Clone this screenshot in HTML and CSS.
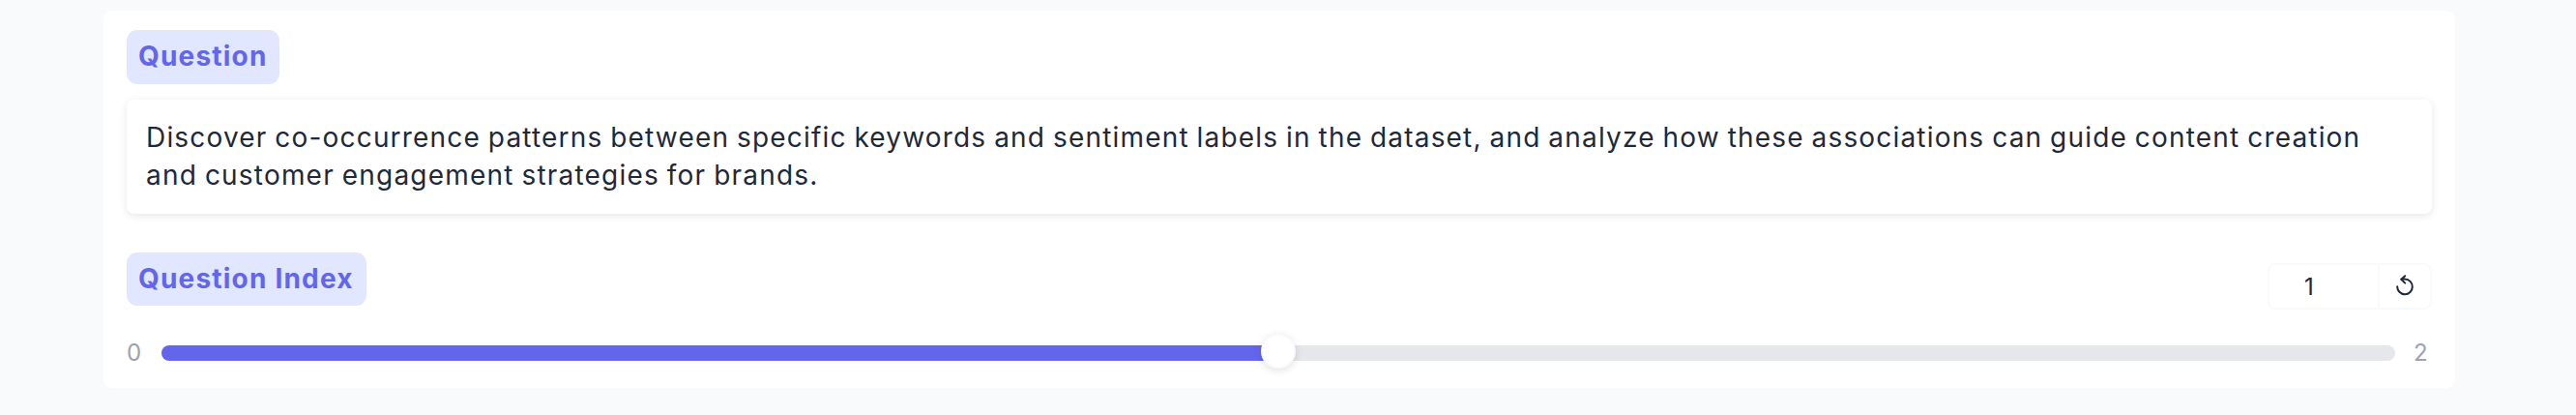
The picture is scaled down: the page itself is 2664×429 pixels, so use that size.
FILE: index.html
```
<!DOCTYPE html>

<html lang="en">

  <head>

    <meta charset="utf-8">

    <title>Question</title>

    <link rel="stylesheet" href="styles.css">

  </head>

  <body>

    <div class="card">

      <p class="label">Question</p>

      <div class="questionBox">
        <span class="line firstLine">Discover co-occurrence patterns between specific keywords and sentiment labels in the dataset, and analyze how these associations can guide content creation</span>
        <span class="line secondLine">and customer engagement strategies for brands.</span>
      </div>

      <div class="indexHeader">

        <p class="label indexLabel">Question Index</p>

        <div class="numberBox">

          <div class="number">1</div>

          <button class="resetButton" aria-label="Reset">
            <svg width="18" height="22" viewBox="0 0 18 22">
              <path d="M1.2 12.2A7.8 7.8 0 1 0 9 4.6H5.2M9.2 1.2L5.2 4.8L9.2 8.6" />
            </svg>
          </button>

        </div>

      </div>

      <!--SLIDER-->

      <div class="sliderRow">

        <span class="limit">0</span>

        <div class="track">
          <div class="fill"></div>
          <div class="thumb"></div>
        </div>

        <span class="limit">2</span>

      </div>

    </div>

  </body>

</html>
```
FILE: styles.css
```
body{
  margin: 0;
  padding: 11px 125px 28px 107px;
  background-color: rgb(249, 250, 252);
  font-family: Inter, "Open Sans", sans-serif;
  color: rgb(31, 41, 55);
}

.card{
  box-sizing: border-box;
  height: 390px;
  padding: 20px 24px;
  background-color: white;
  border-radius: 9px;
}

.label{
  box-sizing: border-box;
  width: 158px;
  height: 56px;
  margin: 0;
  padding-left: 12px;
  border-radius: 11px;
  background-color: rgb(224, 231, 255);
  color: rgb(99, 102, 235);
  font-size: 28px;
  font-weight: 700;
  line-height: 55px;
  letter-spacing: 1.2px;
  white-space: nowrap;
}

.questionBox{
  box-sizing: border-box;
  height: 118px;
  margin-top: 16px;
  padding: 20px 20px;
  border-radius: 8px;
  box-shadow: 0 2px 8px rgba(0, 0, 0, 0.1);
  font-size: 28px;
  line-height: 39px;
}

.line{
  display: block;
  width: max-content;
  white-space: nowrap;
}

.firstLine{
  letter-spacing: 1.18px;
  word-spacing: -1.2px;
}

.secondLine{
  letter-spacing: 1.2px;
  word-spacing: -1.2px;
}

.indexHeader{
  display: flex;
  justify-content: space-between;
  margin-top: 40px;
}

.indexLabel{
  width: 248px;
  height: 55px;
}

.numberBox{
  display: flex;
  box-sizing: border-box;
  width: 170px;
  height: 48px;
  margin-top: 11px;
  border: 2px solid rgb(249, 250, 251);
  border-radius: 8px;
}

.number{
  box-sizing: border-box;
  width: 114px;
  padding-left: 36px;
  border-right: 2px solid rgb(249, 250, 251);
  font-size: 24px;
  line-height: 46px;
}

.resetButton{
  flex: 1;
  display: flex;
  justify-content: center;
  padding: 10px 0 0;
  border: none;
  background: none;
  cursor: pointer;
}

.resetButton path{
  fill: none;
  stroke: rgb(31, 41, 55);
  stroke-width: 2;
  stroke-linecap: round;
  stroke-linejoin: round;
}

.sliderRow{
  display: flex;
  align-items: center;
  height: 30px;
  margin-top: 30px;
}

.limit{
  width: 36px;
  color: rgb(156, 163, 175);
  font-size: 24px;
  line-height: 30px;
}

.limit:last-child{
  box-sizing: border-box;
  width: 38px;
  padding-left: 19px;
}

.track{
  flex: 1;
  position: relative;
  height: 16px;
  border-radius: 8px;
  background-color: rgb(229, 231, 235);
}

.fill{
  width: 50%;
  height: 16px;
  border-radius: 8px 0 0 8px;
  background-color: rgb(99, 102, 235);
}

/* The knob sits on top of the bar */
.thumb{
  position: absolute;
  top: -12px;
  left: calc(50% - 18px);
  width: 32px;
  height: 32px;
  border: 2px solid rgb(249, 250, 251);
  border-radius: 50%;
  background-color: white;
  box-shadow: 0 2px 8px rgba(0, 0, 0, 0.12);
}
```
